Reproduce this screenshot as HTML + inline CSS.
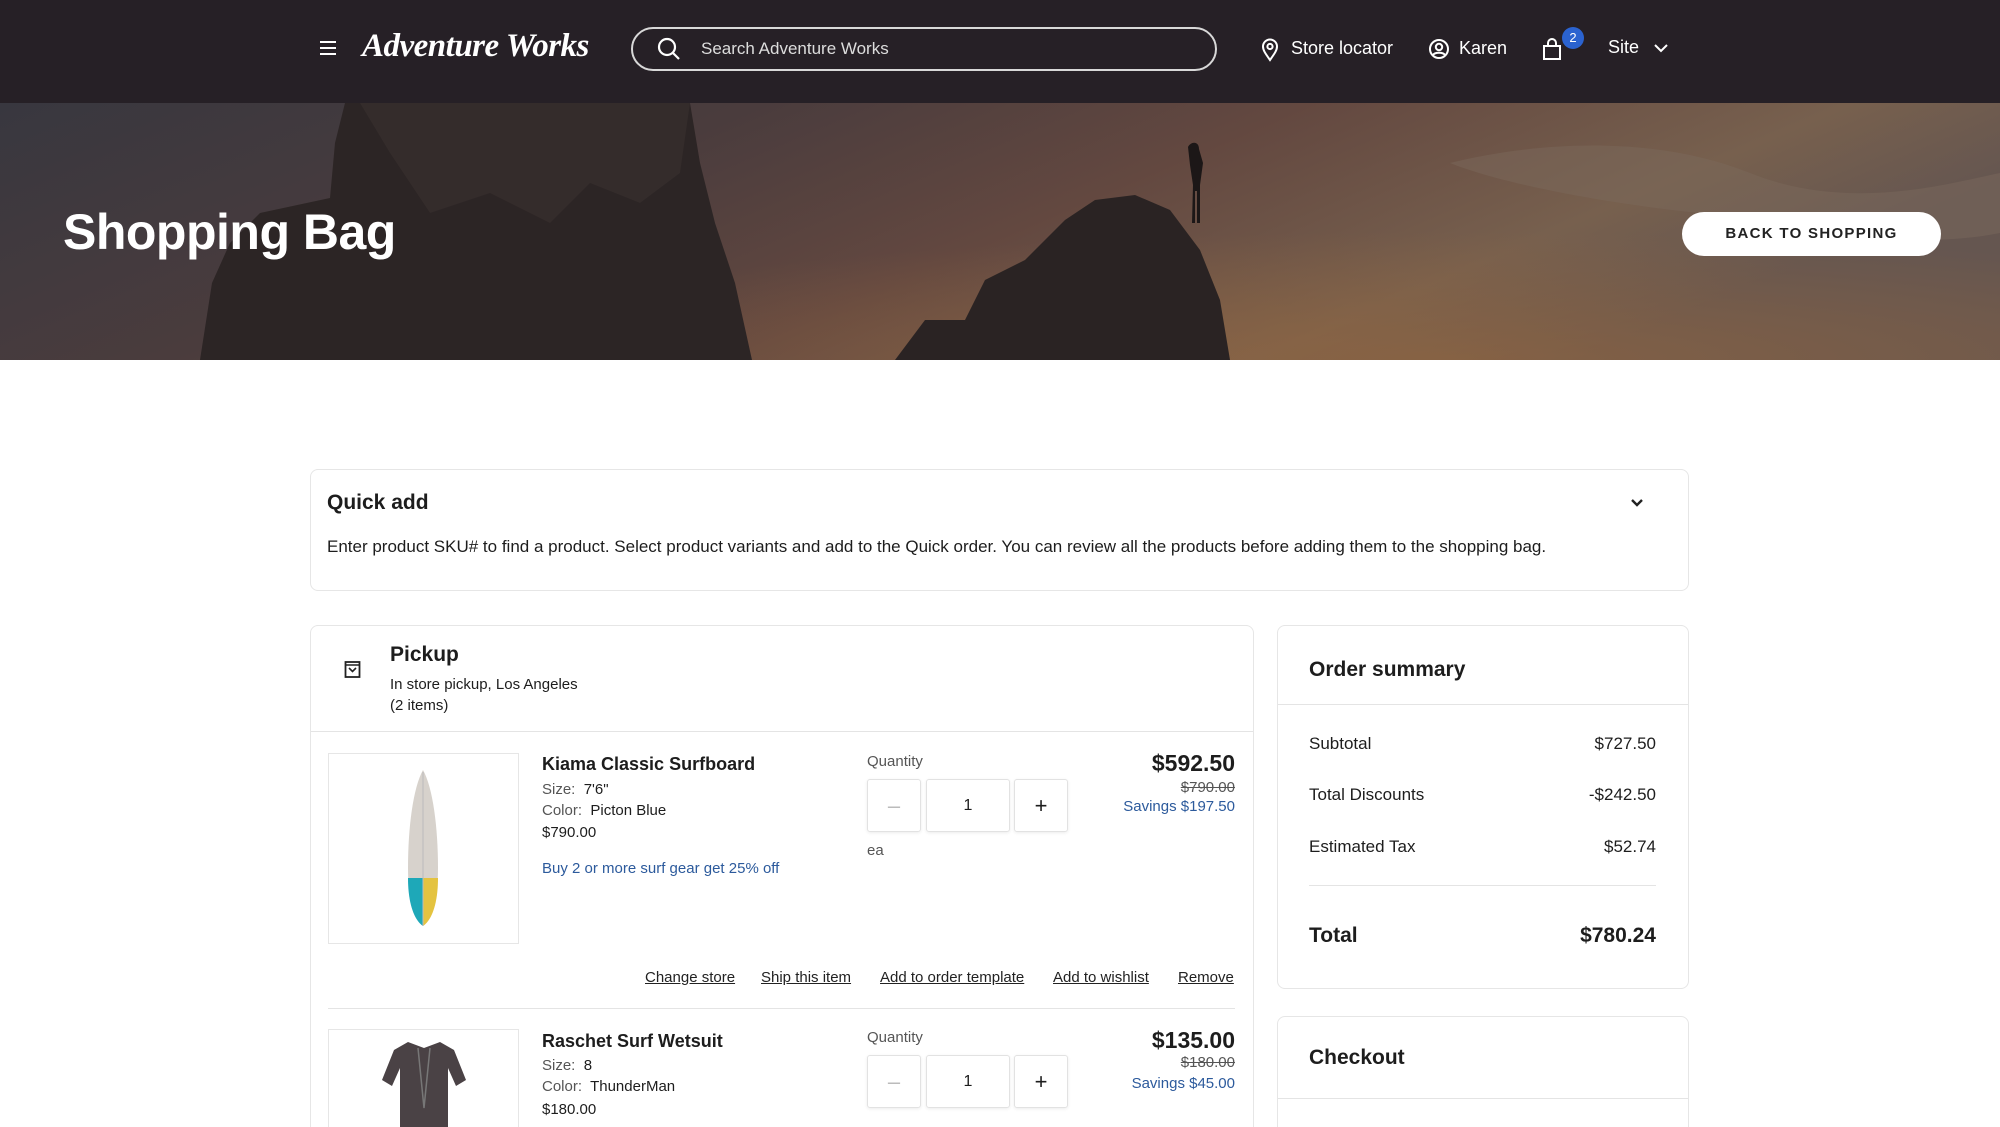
<!DOCTYPE html>
<html style="width:2000px;height:1127px;overflow:hidden"><head><meta charset="utf-8">
<style>
*{margin:0;padding:0;box-sizing:border-box}
body{width:2000px;height:1127px;overflow:hidden;background:#fff;font-family:"Liberation Sans",sans-serif;color:#1d1d1d;position:relative}
.a{position:absolute;white-space:nowrap}
.nav{position:absolute;left:0;top:0;width:2000px;height:103px;background:#262026}
.w{color:#fff}
.card{position:absolute;border:1px solid #e6e6e6;border-radius:8px;background:#fff}
.hl{position:absolute;height:1px;background:#e4e4e4}
.qb{position:absolute;width:54px;height:53px;border:1px solid #e2e2e2;border-radius:3px;box-shadow:0 1px 3px rgba(0,0,0,.08);font-size:22px;text-align:center;line-height:51px}
.lnk{font-size:15px;text-decoration:underline;color:#222}
.g{color:#555}
.blue{color:#2c5a9c}
</style></head><body>
<div class="nav">
  <svg class="a" style="left:319px;top:39px" width="18" height="18" viewBox="0 0 18 18"><path d="M1 3h16M1 9h16M1 15h16" stroke="#fff" stroke-width="2"/></svg>
  <div class="a w" style="left:362px;top:28px;font-family:'Liberation Serif',serif;font-style:italic;font-weight:bold;font-size:33px;letter-spacing:-0.5px">Adventure Works</div>
  <div class="a" style="left:631px;top:27px;width:586px;height:44px;border:2px solid #d8d8d8;border-radius:22px"></div>
  <svg class="a" style="left:656px;top:36px" width="26" height="26" viewBox="0 0 26 26"><circle cx="11" cy="11" r="8" stroke="#fff" stroke-width="2.2" fill="none"/><path d="M17 17l6 6" stroke="#fff" stroke-width="2.2"/></svg>
  <div class="a" style="left:701px;top:39px;font-size:17px;color:#ddd">Search Adventure Works</div>
  <svg class="a" style="left:1261px;top:38px" width="18" height="24" viewBox="0 0 18 24"><path d="M9 22C4 15 2 12 2 8.5a7 7 0 0 1 14 0C16 12 14 15 9 22z" stroke="#fff" stroke-width="2" fill="none"/><circle cx="9" cy="8.5" r="2.6" stroke="#fff" stroke-width="2" fill="none"/></svg>
  <div class="a w" style="left:1291px;top:38px;font-size:18px">Store locator</div>
  <svg class="a" style="left:1428px;top:38px" width="22" height="22" viewBox="0 0 22 22"><circle cx="11" cy="11" r="9" stroke="#fff" stroke-width="2" fill="none"/><circle cx="11" cy="9" r="3.2" stroke="#fff" stroke-width="2" fill="none"/><path d="M5 17c2-3 10-3 12 0" stroke="#fff" stroke-width="2" fill="none"/></svg>
  <div class="a w" style="left:1459px;top:38px;font-size:18px">Karen</div>
  <svg class="a" style="left:1542px;top:37px" width="20" height="24" viewBox="0 0 20 24"><rect x="2" y="9" width="16" height="13" stroke="#fff" stroke-width="2" fill="none"/><path d="M6 9V6a4 4 0 0 1 8 0v3" stroke="#fff" stroke-width="2" fill="none"/></svg>
  <div class="a" style="left:1562px;top:27px;width:22px;height:22px;border-radius:11px;background:#2b63d0;color:#fff;font-size:13px;text-align:center;line-height:22px">2</div>
  <div class="a w" style="left:1608px;top:37px;font-size:18px">Site</div>
  <svg class="a" style="left:1653px;top:42px" width="16" height="12" viewBox="0 0 16 12"><path d="M2 3l6 6 6-6" stroke="#fff" stroke-width="2" fill="none"/></svg>
</div>
<svg class="a" style="left:0;top:103px" width="2000" height="257" viewBox="0 0 2000 257">
  <defs>
    <linearGradient id="sky" x1="0" y1="0" x2="1" y2="0.3">
      <stop offset="0" stop-color="#38373f"/><stop offset="0.35" stop-color="#4a3c3d"/><stop offset="0.6" stop-color="#634840"/><stop offset="0.85" stop-color="#77604e"/><stop offset="1" stop-color="#655650"/>
    </linearGradient>
    <radialGradient id="glow" cx="0.72" cy="1" r="0.5"><stop offset="0" stop-color="#94663e" stop-opacity=".65"/><stop offset="1" stop-color="#94663e" stop-opacity="0"/></radialGradient>
  </defs>
  <rect width="2000" height="257" fill="url(#sky)"/>
  <rect width="2000" height="257" fill="url(#glow)"/>
  <path d="M1450 60c80-20 200-30 300 10s200 10 250 0v60c-100 20-200-10-300-20s-200-30-250-50z" fill="#7d6a5d" opacity=".45"/>
  <path d="M200 257L212 180 230 140 260 110 330 95 335 40 345 0 690 0 700 60 715 120 735 180 752 257z" fill="#2c2525"/>
  <path d="M360 0h330l-10 70-40 30-50-20-40 40-60-30-60 20-40-60z" fill="#342c2b"/>
  <path d="M895 257l30-40 40 0 20-40 40-20 40-40 30-20 40-5 35 15 30 40 20 50 10 60z" fill="#2a2323"/>
  <path d="M1188 44c3-6 11-6 11 2l4 14-3 22v38h-3v-32h-2v32h-3l1-38-3-20z" fill="#1c1717"/>
</svg>
<div class="a w" style="left:63px;top:203px;font-size:50px;font-weight:bold;letter-spacing:-0.5px">Shopping Bag</div>
<div class="a" style="left:1682px;top:212px;width:259px;height:44px;background:#fff;border-radius:22px;font-size:15px;letter-spacing:1.3px;text-align:center;line-height:44px;font-weight:bold;color:#222">BACK TO SHOPPING</div>

<div class="card" style="left:310px;top:469px;width:1379px;height:122px"></div>
<div class="a" style="left:327px;top:491px;font-size:21px;font-weight:bold">Quick add</div>
<svg class="a" style="left:1630px;top:498px" width="14" height="10" viewBox="0 0 14 10"><path d="M2 2l5 5 5-5" stroke="#222" stroke-width="2.4" fill="none"/></svg>
<div class="a" style="left:327px;top:537px;font-size:17px">Enter product SKU# to find a product. Select product variants and add to the Quick order. You can review all the products before adding them to the shopping bag.</div>

<div class="card" style="left:310px;top:625px;width:944px;height:520px"></div>
<svg class="a" style="left:344px;top:659px" width="17" height="19" viewBox="0 0 17 19"><rect x="1.5" y="3" width="14" height="15" stroke="#222" stroke-width="1.8" fill="none"/><path d="M1.5 6h14M5 9l3.5 3.5L12 9" stroke="#222" stroke-width="1.6" fill="none"/></svg>
<div class="a" style="left:390px;top:643px;font-size:21px;font-weight:bold">Pickup</div>
<div class="a" style="left:390px;top:676px;font-size:15px">In store pickup, Los Angeles</div>
<div class="a" style="left:390px;top:697px;font-size:15px">(2 items)</div>
<div class="hl" style="left:311px;top:731px;width:942px"></div>

<div class="a" style="left:328px;top:753px;width:191px;height:191px;border:1px solid #e6e6e6"></div>
<svg class="a" style="left:400px;top:768px" width="46" height="162" viewBox="0 0 46 162"><path d="M23 2C13 20 8 60 8 100c0 30 6 50 15 58 9-8 15-28 15-58 0-40-5-80-15-98z" fill="#d7d2cc"/><path d="M8 110c0 25 6 42 15 48V110z" fill="#1ea8b8"/><path d="M38 110c0 25-6 42-15 48V110z" fill="#e4c340"/><path d="M23 4v154" stroke="#bbb" stroke-width="1"/></svg>
<div class="a" style="left:542px;top:754px;font-size:18px;font-weight:bold">Kiama Classic Surfboard</div>
<div class="a" style="left:542px;top:781px;font-size:15px"><span class="g">Size:</span>&nbsp; 7'6"</div>
<div class="a" style="left:542px;top:802px;font-size:15px"><span class="g">Color:</span>&nbsp; Picton Blue</div>
<div class="a" style="left:542px;top:824px;font-size:15px">$790.00</div>
<div class="a blue" style="left:542px;top:860px;font-size:15px">Buy 2 or more surf gear get 25% off</div>
<div class="a g" style="left:867px;top:753px;font-size:15px">Quantity</div>
<div class="qb" style="left:867px;top:779px;color:#bbb">–</div>
<div class="qb" style="left:926px;top:779px;width:84px;font-size:16px">1</div>
<div class="qb" style="left:1014px;top:779px">+</div>
<div class="a g" style="left:867px;top:842px;font-size:15px">ea</div>
<div class="a" style="right:765px;top:750px;font-size:23px;font-weight:bold">$592.50</div>
<div class="a g" style="right:765px;top:779px;font-size:15px;text-decoration:line-through">$790.00</div>
<div class="a blue" style="right:765px;top:798px;font-size:15px">Savings $197.50</div>
<div class="a lnk" style="left:645px;top:969px">Change store</div>
<div class="a lnk" style="left:761px;top:969px">Ship this item</div>
<div class="a lnk" style="left:880px;top:969px">Add to order template</div>
<div class="a lnk" style="left:1053px;top:969px">Add to wishlist</div>
<div class="a lnk" style="left:1178px;top:969px">Remove</div>
<div class="hl" style="left:328px;top:1008px;width:907px"></div>

<div class="a" style="left:328px;top:1029px;width:191px;height:110px;border:1px solid #e6e6e6;border-bottom:none"></div>
<svg class="a" style="left:378px;top:1040px" width="92" height="90" viewBox="0 0 92 90"><path d="M30 2l16 6 16-6 14 8 12 30-10 6-8-18v62H22V28l-8 18-10-6 12-30z" fill="#4a4245"/><path d="M40 8l6 60 6-60" stroke="#777" stroke-width="1.5" fill="none"/></svg>
<div class="a" style="left:542px;top:1031px;font-size:18px;font-weight:bold">Raschet Surf Wetsuit</div>
<div class="a" style="left:542px;top:1057px;font-size:15px"><span class="g">Size:</span>&nbsp; 8</div>
<div class="a" style="left:542px;top:1078px;font-size:15px"><span class="g">Color:</span>&nbsp; ThunderMan</div>
<div class="a" style="left:542px;top:1101px;font-size:15px">$180.00</div>
<div class="a g" style="left:867px;top:1029px;font-size:15px">Quantity</div>
<div class="qb" style="left:867px;top:1055px;color:#bbb">–</div>
<div class="qb" style="left:926px;top:1055px;width:84px;font-size:16px">1</div>
<div class="qb" style="left:1014px;top:1055px">+</div>
<div class="a" style="right:765px;top:1027px;font-size:23px;font-weight:bold">$135.00</div>
<div class="a g" style="right:765px;top:1054px;font-size:15px;text-decoration:line-through">$180.00</div>
<div class="a blue" style="right:765px;top:1075px;font-size:15px">Savings $45.00</div>

<div class="card" style="left:1277px;top:625px;width:412px;height:364px"></div>
<div class="a" style="left:1309px;top:658px;font-size:21px;font-weight:bold">Order summary</div>
<div class="hl" style="left:1278px;top:704px;width:410px"></div>
<div class="a" style="left:1309px;top:734px;font-size:17px">Subtotal</div>
<div class="a" style="right:344px;top:734px;font-size:17px">$727.50</div>
<div class="a" style="left:1309px;top:785px;font-size:17px">Total Discounts</div>
<div class="a" style="right:344px;top:785px;font-size:17px">-$242.50</div>
<div class="a" style="left:1309px;top:837px;font-size:17px">Estimated Tax</div>
<div class="a" style="right:344px;top:837px;font-size:17px">$52.74</div>
<div class="hl" style="left:1309px;top:885px;width:347px"></div>
<div class="a" style="left:1309px;top:924px;font-size:21px;font-weight:bold">Total</div>
<div class="a" style="right:344px;top:924px;font-size:21px;font-weight:bold">$780.24</div>

<div class="card" style="left:1277px;top:1016px;width:412px;height:160px"></div>
<div class="a" style="left:1309px;top:1046px;font-size:21px;font-weight:bold">Checkout</div>
<div class="hl" style="left:1278px;top:1098px;width:410px"></div>
</body></html>
